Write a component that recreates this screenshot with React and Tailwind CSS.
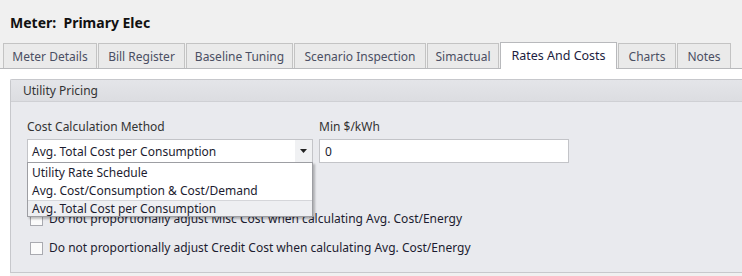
import React from "react";

const tabs = [
  { label: "Meter Details", w: "w-[94px]" },
  { label: "Bill Register", w: "w-[87px]" },
  { label: "Baseline Tuning", w: "w-[107px]" },
  { label: "Scenario Inspection", w: "w-[132px]" },
  { label: "Simactual", w: "w-[72px]" },
  { label: "Rates And Costs", w: "w-[117px]", active: true },
  { label: "Charts", w: "w-[58px]" },
  { label: "Notes", w: "w-[54px]" },
];

function Checkbox() {
  return <div className="w-[13px] h-[13px] border border-[#a9aab0] bg-[#fbfbfb] shrink-0" />;
}

export default function App() {
  return (
    <div
      className="w-[742px] h-[276px] bg-[#f7f7f7] overflow-hidden flex flex-col text-[12px] text-[#333]"
      style={{ fontFamily: '"Noto Sans", "Liberation Sans", Arial, sans-serif' }}
    >
      {/* Title */}
      <div className="h-[42px] bg-[#f0f0f0] flex items-center pl-[10px] shrink-0">
        <span className="text-[14px] font-bold text-[#111] pt-[3px]">Meter:&nbsp; Primary Elec</span>
      </div>
      {/* Tabs */}
      <div className="h-[27px] bg-[#f0f0f0] flex items-end pl-[3px] border-b border-[#b8b9bc] shrink-0 gap-[1px]">
        {tabs.map((t) =>
          t.active ? (
            <div
              key={t.label}
              className={`${t.w} h-[27px] -mb-[1px] bg-white border border-b-0 border-[#b8b9bc] flex items-center justify-center text-[#1c1c40] text-[12.5px] pt-[1px]`}
            >
              {t.label}
            </div>
          ) : (
            <div
              key={t.label}
              className={`${t.w} h-[25px] bg-[#eaeaea] border border-b-0 border-[#c3c3c3] flex items-center justify-center text-[#4a4f63] pt-[2px]`}
            >
              {t.label}
            </div>
          )
        )}
      </div>
      {/* Content */}
      <div className="bg-white flex-1 pt-[10px] pl-[10px] flex flex-col">
        <div className="flex-1 border border-r-0 border-[#c7c8cc] rounded-tl-[2px] bg-[#e9eaee] flex flex-col">
          <div className="h-[22px] bg-gradient-to-b from-[#e4e5e9] to-[#dcdde1] border-b border-[#cfd0d4] flex items-center pl-[12px] text-[#333]">
            Utility Pricing
          </div>
          <div className="flex-1 pl-[16px] pt-[17px]">
            <div className="flex gap-[6px]">
              <div className="flex flex-col">
                <div className="h-[16px] leading-[16px] text-[#333]">Cost Calculation Method</div>
                <div className="relative mt-[4px]">
                  <div className="w-[286px] h-[24px] bg-white border border-[#c3c4c8] flex items-center">
                    <span className="flex-1 pl-[4px] pt-[1px] text-[#1c1c30]">Avg. Total Cost per Consumption</span>
                    <div className="w-[17px] h-full flex items-center justify-center bg-[#f0f1f3]">
                      <svg width="7" height="4" viewBox="0 0 7 4">
                        <path d="M0 0h7L3.5 4z" fill="#222" />
                      </svg>
                    </div>
                  </div>
                  <div className="absolute left-0 top-[23px] w-[286px] bg-white border border-[#9d9ea3] shadow-[2px_2px_2px_rgba(0,0,0,0.25)] z-10 flex flex-col pt-[1px] text-[#1c1c30]">
                    <div className="h-[18px] leading-[18px] pl-[4px]">Utility Rate Schedule</div>
                    <div className="h-[18px] leading-[18px] pl-[4px]">Avg. Cost/Consumption &amp; Cost/Demand</div>
                    <div className="h-[16px] leading-[16px] pl-[4px] bg-[#eeeff2] border-t border-[#d5d6da]">Avg. Total Cost per Consumption</div>
                  </div>
                </div>
              </div>
              <div className="flex flex-col">
                <div className="h-[16px] leading-[16px] text-[#333]">Min $/kWh</div>
                <div className="mt-[4px] w-[250px] h-[24px] bg-white border border-[#c3c4c8] flex items-center pl-[5px] pt-[1px] text-[#1c1c30]">
                  0
                </div>
              </div>
            </div>
            <div className="flex flex-col gap-[15px] mt-[49px] pl-[3px]">
              <div className="flex items-center gap-[6px] h-[14px]">
                <Checkbox />
                <span className="text-[#1c1c30]">Do not proportionally adjust Misc Cost when calculating Avg. Cost/Energy</span>
              </div>
              <div className="flex items-center gap-[6px] h-[14px]">
                <Checkbox />
                <span className="text-[#1c1c30]">Do not proportionally adjust Credit Cost when calculating Avg. Cost/Energy</span>
              </div>
            </div>
          </div>
        </div>
        <div className="h-[3px] bg-[#f0f0f0]" />
      </div>
    </div>
  );
}
